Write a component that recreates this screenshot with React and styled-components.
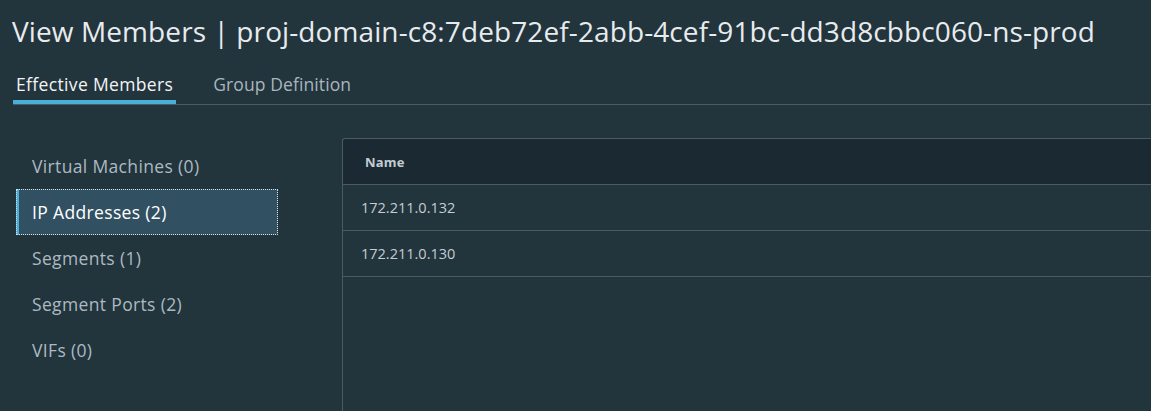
import React from "react";
import styled, { createGlobalStyle } from "styled-components";

const GlobalStyle = createGlobalStyle`
  html, body {
    margin: 0;
    padding: 0;
    background: #22343c;
    font-family: "Open Sans", "Liberation Sans", sans-serif;
    overflow: hidden;
  }
`;

const navItems = [
  { label: "Virtual Machines (0)" },
  { label: "IP Addresses (2)", active: true },
  { label: "Segments (1)" },
  { label: "Segment Ports (2)" },
  { label: "VIFs (0)" },
];

const rows = ["172.211.0.132", "172.211.0.130"];

const App = () => {
  return (
    <>
      <GlobalStyle />
      <Page>
        <Title>View Members | proj-domain-c8:7deb72ef-2abb-4cef-91bc-dd3d8cbbc060-ns-prod</Title>
        <Tabs>
          <Tab active>Effective Members</Tab>
          <Tab>Group Definition</Tab>
        </Tabs>
        <Body>
          <Nav>
            {navItems.map((item) => (
              <NavItem key={item.label} active={item.active}>
                {item.label}
              </NavItem>
            ))}
          </Nav>
          <Grid>
            <HeaderRow>
              <HeaderCell>Name</HeaderCell>
            </HeaderRow>
            {rows.map((r) => (
              <Row key={r}>{r}</Row>
            ))}
          </Grid>
        </Body>
      </Page>
    </>
  );
};

export default App;

const Page = styled.div`
  width: 1151px;
  height: 411px;
  overflow: hidden;
  box-sizing: border-box;
  padding: 12px 0 0 0;
`;

const Title = styled.h1`
  margin: 0 0 0 12px;
  font-weight: 400;
  font-size: 28px;
  letter-spacing: 0.1px;
  line-height: 38px;
  color: #e8ebee;
  white-space: nowrap;
`;

const Tabs = styled.div`
  display: flex;
  gap: 34px;
  margin: 17px 0 0 13px;
  border-bottom: 1px solid #4b5b64;
`;

const Tab = styled.div`
  padding: 0 3px 3px;
  font-size: 17.5px;
  letter-spacing: ${(p) => (p.active ? "0.35px" : "0.1px")};
  line-height: 34px;
  color: ${(p) => (p.active ? "#f2f4f5" : "#a9b6be")};
  box-shadow: ${(p) => (p.active ? "inset 0 -4px 0 #49afd9" : "none")};
`;

const Body = styled.div`
  display: flex;
  margin-top: 33px;
`;

const Nav = styled.div`
  display: flex;
  flex-direction: column;
  width: 262px;
  margin: 5px 0 0 16px;
`;

const NavItem = styled.div`
  height: 46px;
  display: flex;
  align-items: center;
  box-sizing: border-box;
  padding-left: ${(p) => (p.active ? "13px" : "16px")};
  font-size: 17.5px;
  letter-spacing: 0.35px;
  color: ${(p) => (p.active ? "#ffffff" : "#adbac2")};
  background: ${(p) => (p.active ? "#315062" : "transparent")};
  border-left: ${(p) => (p.active ? "3px solid #49afd9" : "none")};
  outline: ${(p) => (p.active ? "1px dotted #d8e0e5" : "none")};
  outline-offset: -1px;
`;

const Grid = styled.div`
  flex: 1;
  margin-left: 64px;
  height: 300px;
  border: 1px solid #4b5b64;
  border-right: none;
  border-radius: 3px 0 0 0;
`;

const HeaderRow = styled.div`
  height: 46px;
  box-sizing: border-box;
  display: flex;
  align-items: center;
  background: #1b2a32;
  border-bottom: 1px solid #4b5b64;
  border-radius: 3px 0 0 0;
`;

const HeaderCell = styled.div`
  padding-left: 22px;
  font-size: 13px;
  font-weight: 700;
  letter-spacing: 0.2px;
  color: #c3cdd3;
`;

const Row = styled.div`
  height: 46px;
  box-sizing: border-box;
  display: flex;
  align-items: center;
  padding-left: 18px;
  border-bottom: 1px solid #4b5b64;
  font-size: 14.5px;
  color: #c3cdd3;
`;
